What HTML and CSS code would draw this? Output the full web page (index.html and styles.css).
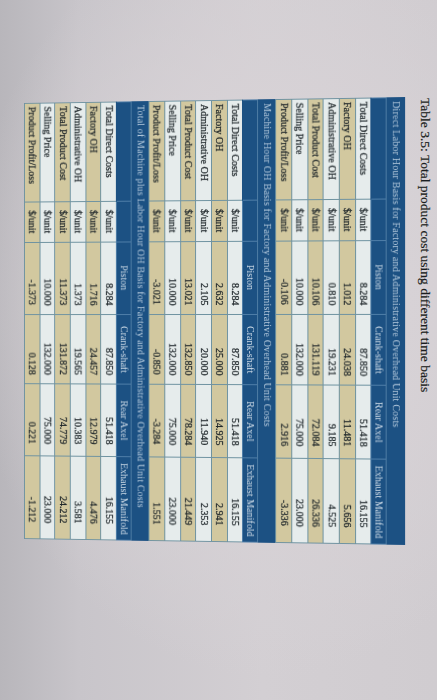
FILE: index.html
```html
<!DOCTYPE html>
<html lang="en">
<head>
<meta charset="utf-8">
<title>Table 3.5</title>
<link rel="stylesheet" href="styles.css">
</head>
<body>
<div class="page">
  <h1 class="title">Table 3.5: Total product cost using different time basis</h1>
  <table class="cost">
    <colgroup>
      <col class="c-label"><col class="c-unit"><col class="c-piston"><col class="c-crank"><col class="c-rear"><col class="c-exh">
    </colgroup>
    <tbody>
      <tr class="cap"><td colspan="6">Direct Labor Hour Basis for Factory and Administrative Overhead Unit Costs</td></tr>
      <tr class="head"><td></td><td></td><td>Piston</td><td>Crank-shaft</td><td>Rear Axel</td><td>Exhaust Manifold</td></tr>
      <tr class="lt"><td class="lbl">Total Direct Costs</td><td class="u">$/unit</td><td>8.284</td><td>87.850</td><td>51.418</td><td>16.155</td></tr>
      <tr class="tn"><td class="lbl">Factory OH</td><td class="u">$/unit</td><td>1.012</td><td>24.038</td><td>11.481</td><td>5.656</td></tr>
      <tr class="lt"><td class="lbl">Administrative OH</td><td class="u">$/unit</td><td>0.810</td><td>19.231</td><td>9.185</td><td>4.525</td></tr>
      <tr class="tn"><td class="lbl">Total Product Cost</td><td class="u">$/unit</td><td>10.106</td><td>131.119</td><td>72.084</td><td>26.336</td></tr>
      <tr class="lt"><td class="lbl">Selling Price</td><td class="u">$/unit</td><td>10.000</td><td>132.000</td><td>75.000</td><td>23.000</td></tr>
      <tr class="tn"><td class="lbl">Product Profit/Loss</td><td class="u">$/unit</td><td>-0.106</td><td>0.881</td><td>2.916</td><td>-3.336</td></tr>

      <tr class="cap"><td colspan="6">Machine Hour OH Basis for Factory and Administrative Overhead Unit Costs</td></tr>
      <tr class="head"><td></td><td></td><td>Piston</td><td>Crank-shaft</td><td>Rear Axel</td><td>Exhaust Manifold</td></tr>
      <tr class="lt"><td class="lbl">Total Direct Costs</td><td class="u">$/unit</td><td>8.284</td><td>87.850</td><td>51.418</td><td>16.155</td></tr>
      <tr class="tn"><td class="lbl">Factory OH</td><td class="u">$/unit</td><td>2.632</td><td>25.000</td><td>14.925</td><td>2.941</td></tr>
      <tr class="lt"><td class="lbl">Administrative OH</td><td class="u">$/unit</td><td>2.105</td><td>20.000</td><td>11.940</td><td>2.353</td></tr>
      <tr class="tn"><td class="lbl">Total Product Cost</td><td class="u">$/unit</td><td>13.021</td><td>132.850</td><td>78.284</td><td>21.449</td></tr>
      <tr class="lt"><td class="lbl">Selling Price</td><td class="u">$/unit</td><td>10.000</td><td>132.000</td><td>75.000</td><td>23.000</td></tr>
      <tr class="tn"><td class="lbl">Product Profit/Loss</td><td class="u">$/unit</td><td>-3.021</td><td>-0.850</td><td>-3.284</td><td>1.551</td></tr>

      <tr class="cap"><td colspan="6">Total of Machine plus Labor Hour OH Basis for Factory and Administrative Overhead Unit Costs</td></tr>
      <tr class="head"><td></td><td></td><td>Piston</td><td>Crank-shaft</td><td>Rear Axel</td><td>Exhaust Manifold</td></tr>
      <tr class="lt"><td class="lbl">Total Direct Costs</td><td class="u">$/unit</td><td>8.284</td><td>87.850</td><td>51.418</td><td>16.155</td></tr>
      <tr class="tn"><td class="lbl">Factory OH</td><td class="u">$/unit</td><td>1.716</td><td>24.457</td><td>12.979</td><td>4.476</td></tr>
      <tr class="lt"><td class="lbl">Administrative OH</td><td class="u">$/unit</td><td>1.373</td><td>19.565</td><td>10.383</td><td>3.581</td></tr>
      <tr class="tn"><td class="lbl">Total Product Cost</td><td class="u">$/unit</td><td>11.373</td><td>131.872</td><td>74.779</td><td>24.212</td></tr>
      <tr class="lt"><td class="lbl">Selling Price</td><td class="u">$/unit</td><td>10.000</td><td>132.000</td><td>75.000</td><td>23.000</td></tr>
      <tr class="tn"><td class="lbl">Product Profit/Loss</td><td class="u">$/unit</td><td>-1.373</td><td>0.128</td><td>0.221</td><td>-1.212</td></tr>
    </tbody>
  </table>
</div>
</body>
</html>
```
FILE: styles.css
```css
html, body {
  margin: 0;
  padding: 0;
}
body {
  width: 437px;
  height: 700px;
  overflow: hidden;
  background:
    radial-gradient(ellipse 70% 55% at 62% 42%, #e2dde1 0%, #d7d2d6 45%, rgba(215,210,214,0) 100%),
    linear-gradient(90deg, #b8b6bb 0%, #c8c5ca 18%, #d3cfd3 60%, #d0ccd0 100%);
  font-family: "Liberation Serif", "Times New Roman", serif;
  color: #1b2327;
}
.page {
  writing-mode: vertical-rl;
  width: 437px;
  height: 700px;
  box-sizing: border-box;
  padding: 98px 4px 0 0;
}
.title {
  margin: 0 0 0 14px;
  font-size: 13.5px;
  line-height: 16px;
  font-weight: normal;
  color: #1a1d20;
  -webkit-text-stroke: 0.2px #1a1d20;
}
.cost {
  margin-top: 2px;
  border-collapse: collapse;
  table-layout: fixed;
  font-size: 10px;
  border: 1px solid #557a8b;
  transform: perspective(1000px) rotateY(-4deg);
  transform-origin: 50% 50%;
}
.c-label { inline-size: 100px; }
.c-unit { inline-size: 41px; }
.c-piston { inline-size: 73px; }
.c-crank { inline-size: 70px; }
.c-rear { inline-size: 73px; }
.c-exh { inline-size: 84px; }

.cost td {
  padding: 0;
  line-height: 12px;
  white-space: nowrap;
  overflow: hidden;
  border: 1px solid #6f93a1;
  text-align: end;
  padding-inline-end: 9px;
  -webkit-text-stroke: 0.25px #1b2327;
}
.cost tr.lt td { background: #e6ecec; }
.cost tr.tn td { background: #d2c89f; }
.cost tr.lt, .cost tr.tn { block-size: 15.7px; }
.cost td.lbl {
  text-align: start;
  padding-inline-start: 3px;
  padding-inline-end: 0;
}
.cost td.u {
  text-align: center;
  padding-inline-end: 0;
}
.cost td:nth-child(5) { padding-inline-end: 12px; }
.cost td:nth-child(6) { padding-inline-end: 16px; }

.cost tr.cap { block-size: 18px; }
.cost tr.cap td {
  background: #1c5183;
  color: #b5cadd;
  -webkit-text-stroke: 0;
  text-align: start;
  padding-inline-start: 3px;
  padding-inline-end: 0;
  letter-spacing: 0.15px;
  border-color: #1c5183;
  border-left-color: #4d7ba3;
}
.cost tr.head { block-size: 15px; }
.cost tr.head td {
  background: #1c5183;
  color: #d3dfea;
  -webkit-text-stroke: 0;
  text-align: center;
  padding-inline-end: 0;
  border-color: #4f7ea8;
}
.cost tr.head td:first-child {
  border-block-end-color: #1c5183;
}
```
